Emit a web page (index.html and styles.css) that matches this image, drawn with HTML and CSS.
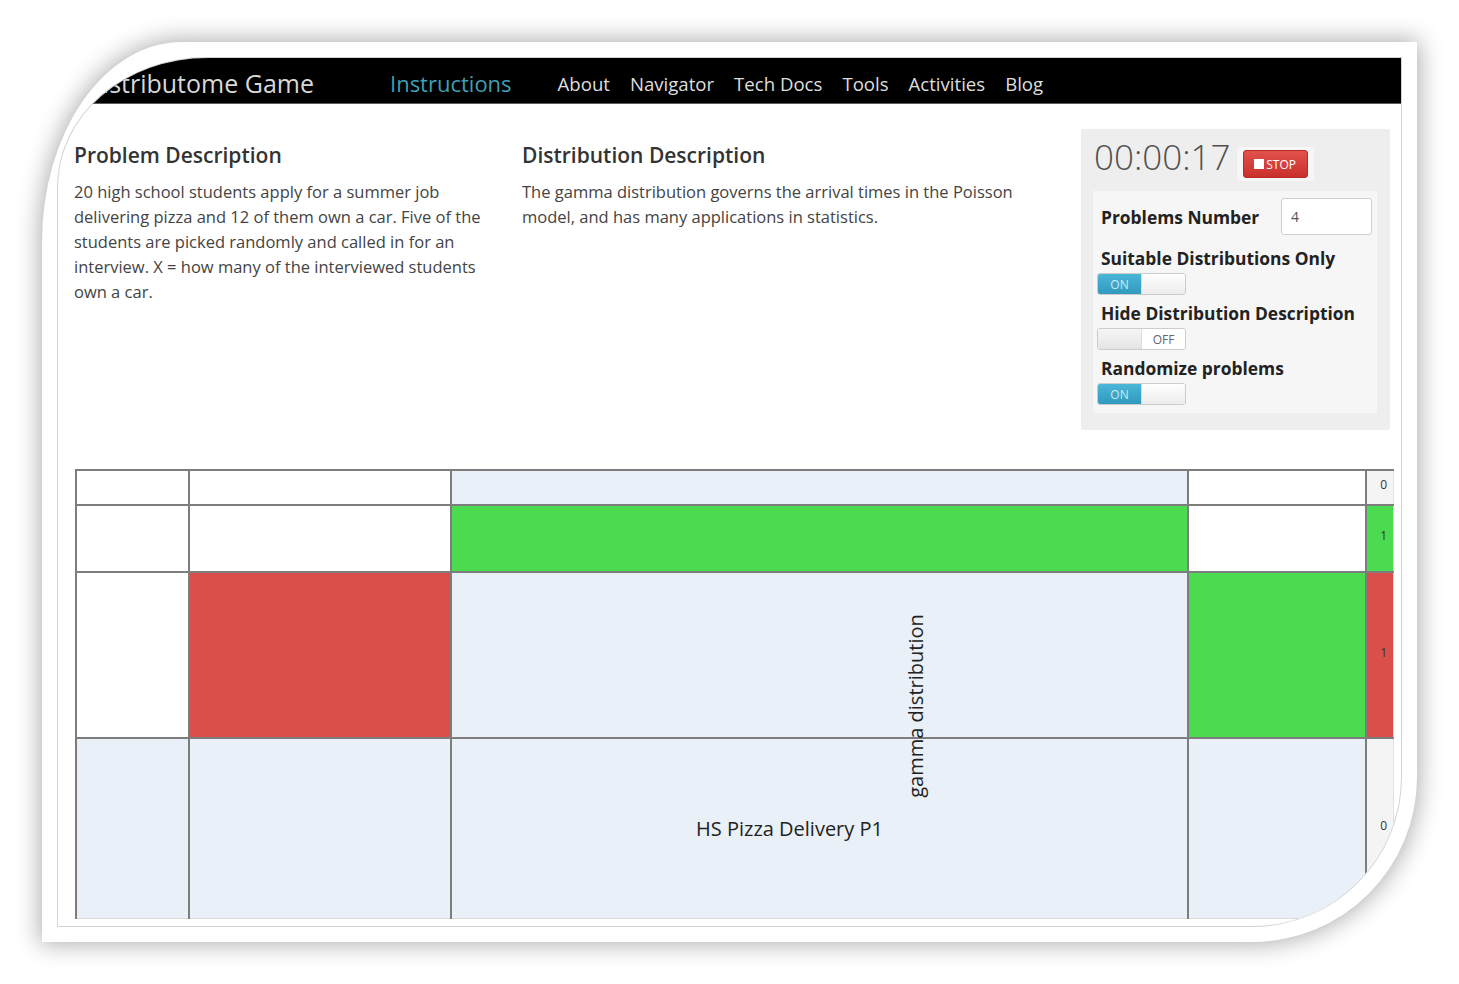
FILE: index.html
```html
<!DOCTYPE html>
<html lang="en">
<head>
<meta charset="utf-8">
<title>Distributome Game</title>
<link rel="stylesheet" href="styles.css">
</head>
<body>
<div class="frame">
  <div class="page">
    <nav class="navbar">
      <span class="brand">Distributome Game</span>
      <a class="nav-active">Instructions</a>
      <ul class="nav-links">
        <li>About</li>
        <li>Navigator</li>
        <li>Tech Docs</li>
        <li>Tools</li>
        <li>Activities</li>
        <li>Blog</li>
      </ul>
    </nav>
    <main class="content">
      <section class="info">
        <div class="col col-problem">
          <h2>Problem Description</h2>
          <p>20 high school students apply for a summer job delivering pizza and 12 of them own a car. Five of the students are picked randomly and called in for an interview. X = how many of the interviewed students own a car.</p>
        </div>
        <div class="col col-dist">
          <h2>Distribution Description</h2>
          <p>The gamma distribution governs the arrival times in the Poisson model, and has many applications in statistics.</p>
        </div>
        <aside class="panel">
          <div class="timer-row">
            <span class="timer">00:00:17</span>
            <span class="btn-wrap"><button class="btn-stop"><span class="sq"></span>STOP</button></span>
          </div>
          <div class="settings">
            <div class="setting-row">
              <span class="s-label">Problems Number</span>
              <input class="num" type="text" value="4">
            </div>
            <div class="setting first">
              <div class="s-label">Suitable Distributions Only</div>
              <div class="switch"><span class="half on">ON</span><span class="half blank"></span></div>
            </div>
            <div class="setting">
              <div class="s-label">Hide Distribution Description</div>
              <div class="switch"><span class="half blank dim"></span><span class="half off">OFF</span></div>
            </div>
            <div class="setting">
              <div class="s-label">Randomize problems</div>
              <div class="switch"><span class="half on">ON</span><span class="half blank"></span></div>
            </div>
          </div>
        </aside>
      </section>
      <div class="board">
        <table class="grid">
          <colgroup>
            <col class="c1"><col class="c2"><col class="c3"><col class="c4"><col class="c5">
          </colgroup>
          <tr class="r1">
            <td class="w"></td><td class="w"></td><td class="b"></td><td class="w"></td><td class="g n">0</td>
          </tr>
          <tr class="r2">
            <td class="w"></td><td class="w"></td><td class="gr"></td><td class="w"></td><td class="gr n">1</td>
          </tr>
          <tr class="r3">
            <td class="w"></td><td class="rd"></td><td class="b"></td><td class="gr"></td><td class="rd n">1</td>
          </tr>
          <tr class="r4">
            <td class="b"></td><td class="b"></td><td class="b name">HS Pizza Delivery P1</td><td class="b"></td><td class="g n">0</td>
          </tr>
        </table>
        <div class="vlabel">gamma distribution</div>
      </div>
    </main>
  </div>
</div>
</body>
</html>
```

FILE: styles.css
```css
html, body {
  margin: 0;
  background: #ffffff;
}
body {
  width: 1459px;
  height: 984px;
  box-sizing: border-box;
  padding: 42px 0 0 42px;
  overflow: hidden;
  font-family: "Open Sans", "DejaVu Sans", sans-serif;
  color: #333;
}
.frame {
  width: 1375px;
  height: 900px;
  box-sizing: border-box;
  padding: 15px;
  background: #fff;
  border-radius: 140px 0 165px 0 / 200px 0 165px 0;
  box-shadow: 0 0 24px 2px rgba(0, 0, 0, 0.33);
}
.page {
  height: 100%;
  box-sizing: border-box;
  border: 1px solid #d4d4d4;
  border-radius: 150px 0 150px 0 / 130px 0 150px 0;
  overflow: hidden;
  background: #fff;
}

/* navbar */
.navbar {
  height: 46px;
  background: #000;
  border-bottom: 1px solid #5a5a5a;
  display: flex;
  align-items: center;
  padding-top: 5px;
  box-sizing: border-box;
}
.brand {
  width: 256px;
  flex: none;
  text-align: right;
  white-space: nowrap;
  font-size: 25px;
  color: #d8d8d8;
  font-weight: 400;
}
.nav-active {
  margin-left: 76px;
  font-size: 22px;
  color: #3f9fb4;
}
.nav-links {
  list-style: none;
  margin: 0 0 0 46px;
  padding: 0;
  display: flex;
  gap: 20px;
  font-size: 18.6px;
  color: #dedede;
}

/* content */
.content {
  padding: 0 11px 0 16px;
}
.info {
  display: flex;
  margin-top: 25px;
  align-items: flex-start;
}
.col h2 {
  margin: 15px 0 12px;
  font-size: 21px;
  line-height: 23px;
  font-weight: 600;
  color: #333;
}
.col p {
  margin: 0;
  font-size: 16.5px;
  line-height: 25px;
  color: #444;
}
.col-problem {
  width: 425px;
  margin-right: 23px;
}
.col-dist {
  width: 520px;
}

/* panel */
.panel {
  width: 309px;
  flex: none;
  margin-left: auto;
  box-sizing: border-box;
  background: #eeeeee;
  padding: 6px 13px 17px 12px;
  border-radius: 2px;
}
.timer-row {
  height: 56px;
  display: flex;
  align-items: flex-start;
  padding-left: 1px;
}
.timer {
  font-size: 35px;
  line-height: 44px;
  font-weight: 300;
  color: #505050;
}
.btn-wrap {
  margin: 12px 0 0 6px;
  padding: 3px 6px;
  background: #f6f6f6;
  display: flex;
}
.btn-stop {
  width: 65px;
  height: 28px;
  border: 1px solid #b52b27;
  border-radius: 3px;
  background: linear-gradient(#e2514c, #c9302c);
  color: #fff;
  font-family: "Open Sans", sans-serif;
  font-size: 12px;
  display: flex;
  align-items: center;
  justify-content: center;
  padding: 0;
  gap: 2px;
}
.sq {
  width: 10px;
  height: 10px;
  background: #fff;
  display: inline-block;
}
.settings {
  background: #f6f6f6;
  padding: 7px 5px 8px 4px;
}
.setting-row {
  display: flex;
  align-items: center;
  height: 37px;
}
.s-label {
  font-size: 17.4px;
  font-weight: 700;
  line-height: 20px;
  color: #222;
  padding-left: 4px;
  white-space: nowrap;
}
.num {
  margin-left: auto;
  width: 91px;
  height: 37px;
  box-sizing: border-box;
  border: 1px solid #cfcfcf;
  border-radius: 3px;
  background: #fff;
  font-family: "Open Sans", sans-serif;
  font-size: 14px;
  color: #555;
  padding: 0 9px;
}
.setting {
  margin-top: 8px;
}
.setting.first {
  margin-top: 13px;
}
.switch {
  margin-top: 5px;
  width: 89px;
  height: 22px;
  box-sizing: border-box;
  border: 1px solid #cccccc;
  border-radius: 3px;
  display: flex;
  overflow: hidden;
}
.half {
  width: 50%;
  display: flex;
  align-items: center;
  justify-content: center;
  font-size: 12px;
}
.half.on {
  background: linear-gradient(#4ab6d8, #3199bd);
  color: #cdeaf5;
}
.half.blank {
  background: linear-gradient(#ffffff, #ececec);
  border-left: 1px solid #dcdcdc;
}
.half.blank.dim {
  border-left: 0;
  border-right: 1px solid #dcdcdc;
  background: linear-gradient(#f6f6f6, #e4e4e4);
}
.half.off {
  background: #fff;
  color: #666;
}

/* board */
.board {
  position: relative;
  margin: 39px 0 0 1px;
}
.grid {
  width: 1317px;
  border-collapse: collapse;
  table-layout: fixed;
}
.c1 { width: 113px; }
.c2 { width: 262px; }
.c3 { width: 737px; }
.c4 { width: 178px; }
.c5 { width: 27px; }
.grid td {
  border: 2px solid #7d7d7d;
  padding: 0;
}
.grid td:last-child {
  border-right: 1px solid #e2e2e2;
}
.grid .r4 td {
  border-bottom: 1px solid #dadada;
}
.r1 { height: 35px; }
.r2 { height: 67px; }
.r3 { height: 166px; }
.r4 { height: 180px; }
.w { background: #ffffff; }
.b { background: #e9f0f7; }
.g { background: #f4f4f4; }
.gr { background: #4adb51; }
.rd { background: #db4f4a; }
.n {
  font-size: 12px;
  color: #333;
  text-align: center;
  padding-left: 8px !important;
  padding-bottom: 6px !important;
  vertical-align: middle;
}
.name {
  font-size: 20px;
  color: #222;
  text-align: center;
  padding-right: 60px !important;
}
.vlabel {
  position: absolute;
  left: 840px;
  top: 237px;
  transform: translate(-50%, -50%) rotate(-90deg);
  font-size: 20px;
  color: #222;
  white-space: nowrap;
}
```
